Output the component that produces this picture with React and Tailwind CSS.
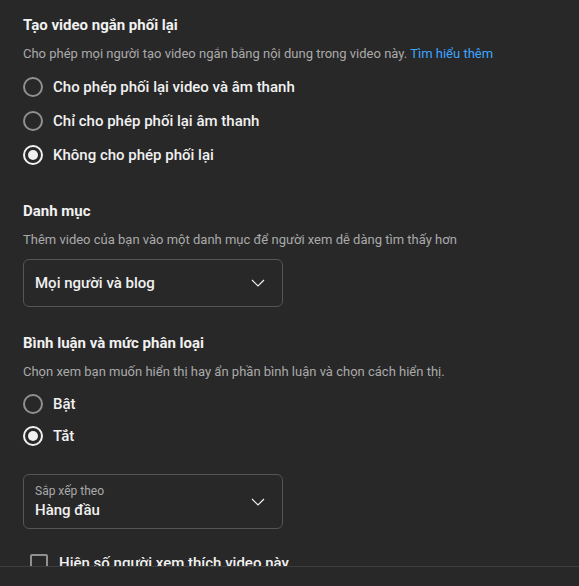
import React from "react";

function Radio({ checked, label }) {
  return (
    <div className="flex items-center h-full">
      <span
        className={
          "relative flex items-center justify-center w-[20px] h-[20px] rounded-full border-2 " +
          (checked ? "border-[#f1f1f1]" : "border-[#909090]")
        }
      >
        {checked && <span className="block w-[10px] h-[10px] rounded-full bg-[#f1f1f1]" />}
      </span>
      <span className="ml-[10px] text-[15px] leading-[22px] font-medium text-[#f1f1f1]">{label}</span>
    </div>
  );
}

function Chevron() {
  return (
    <svg width="14" height="8" viewBox="0 0 14 8" fill="none">
      <path d="M1 1 L7 7 L13 1" stroke="#f1f1f1" strokeWidth="1.2" />
    </svg>
  );
}

export default function App() {
  return (
    <div
      className="h-[586px] w-[579px] flex flex-col bg-[#282828] text-[#f1f1f1] overflow-hidden"
      style={{ fontFamily: "Roboto, 'Noto Sans', sans-serif" }}
    >
      <div className="flex-1 min-h-0 overflow-hidden">
        <div className="pl-[23px] pt-[14px]">
          <h2 className="text-[15px] leading-[22px] font-bold">Tạo video ngắn phối lại</h2>
          <p className="mt-[8px] text-[13px] leading-[20px] text-[#aaaaaa]">
            Cho phép mọi người tạo video ngắn bằng nội dung trong video này.{" "}
            <span className="text-[#3ea6ff]">Tìm hiểu thêm</span>
          </p>
          <div className="mt-[6px]">
            <div className="h-[34px]"><Radio label="Cho phép phối lại video và âm thanh" /></div>
            <div className="h-[34px]"><Radio label="Chỉ cho phép phối lại âm thanh" /></div>
            <div className="h-[34px]"><Radio checked label="Không cho phép phối lại" /></div>
          </div>

          <h2 className="mt-[28px] text-[15px] leading-[22px] font-bold">Danh mục</h2>
          <p className="mt-[8px] text-[13px] leading-[20px] text-[#aaaaaa]">
            Thêm video của bạn vào một danh mục để người xem dễ dàng tìm thấy hơn
          </p>
          <div className="mt-[9px] w-[260px] h-[48px] rounded-[6px] border border-[#555555] flex items-center justify-between pl-[11px] pr-[17px]">
            <span className="text-[15px] leading-[22px] font-medium">Mọi người và blog</span>
            <Chevron />
          </div>

          <h2 className="mt-[25px] text-[15px] leading-[22px] font-bold">Bình luận và mức phân loại</h2>
          <p className="mt-[8px] text-[13px] leading-[20px] text-[#aaaaaa]">
            Chọn xem bạn muốn hiển thị hay ẩn phần bình luận và chọn cách hiển thị.
          </p>
          <div className="mt-[6px]">
            <div className="h-[32px]"><Radio label="Bật" /></div>
            <div className="h-[32px]"><Radio checked label="Tắt" /></div>
          </div>

          <div className="mt-[22px] w-[260px] h-[55px] rounded-[6px] border border-[#555555] flex items-center justify-between pl-[11px] pr-[17px]">
            <div className="flex flex-col">
              <span className="text-[12px] leading-[16px] text-[#aaaaaa]">Sắp xếp theo</span>
              <span className="text-[15px] leading-[22px] font-medium">Hàng đầu</span>
            </div>
            <Chevron />
          </div>

          <div className="mt-[23px] ml-[7px] flex items-center">
            <span className="w-[18px] h-[18px] rounded-[2px] border-2 border-[#909090]" />
            <span className="ml-[11px] text-[15px] leading-[22px] font-medium">Hiện số người xem thích video này</span>
          </div>
        </div>
      </div>
      <div className="h-[20px] border-t border-[#3e3e3e] shrink-0" />
    </div>
  );
}
